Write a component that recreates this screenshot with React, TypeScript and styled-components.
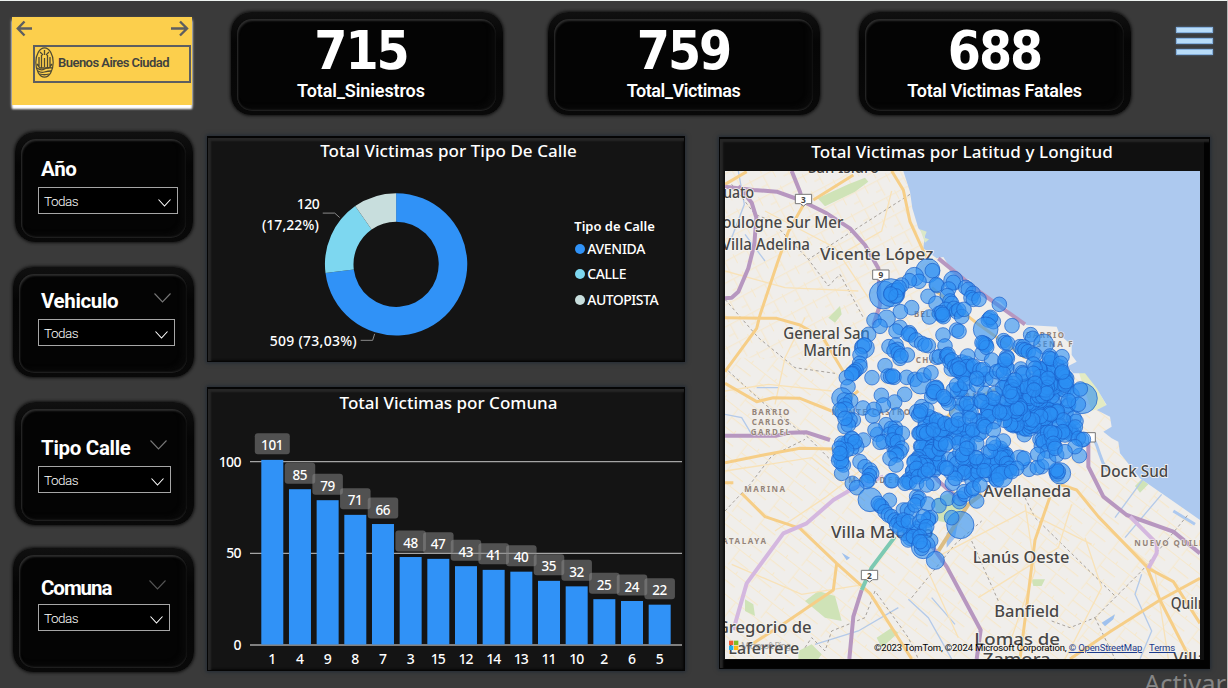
import React from "react";
import styled, { createGlobalStyle } from "styled-components";

const Global = createGlobalStyle`
  * { box-sizing: border-box; }
  body { margin: 0; background: #3a3a3a; overflow: hidden; }
`;

const din = `Roboto, "Liberation Sans", sans-serif`;
const segoe = `"Noto Sans", "Open Sans", sans-serif`;

const Page = styled.main`
  position: relative;
  width: 1228px;
  height: 688px;
  overflow: hidden;
  background: #3a3a3a;
  border-top: 1px solid #eef3f0;
  border-right: 1px solid #b9b9b9;
  color: #fff;
  font-family: ${din};
`;

const Header = styled.header`
  display: flex;
  align-items: flex-start;
  height: 129px;
  padding: 9px 13px 0 12px;
`;

const Logo = styled.div`
  width: 180px;
  height: 88px;
  margin-top: 7px;
  padding-top: 3px;
  background: #fccf4c;
  box-shadow: 0 4px 2px #fff, 0 2px 3px 0 #bdbdbd;
`;

const LogoArrows = styled.div`
  display: flex;
  justify-content: space-between;
  padding: 0 3px 0 4px;
  height: 25px;
`;

const LogoFrame = styled.div`
  display: flex;
  align-items: center;
  gap: 4px;
  width: 158px;
  height: 38px;
  margin-left: 21px;
  padding-bottom: 3px;
  border: 2px solid #5d5e60;
  color: #40423f;
  font-size: 13px;
  font-weight: 600;
  letter-spacing: -0.54px;
  white-space: nowrap;
`;

const Bevel = styled.section<{ $w: number; $h: number; $ml?: number; $mt?: number }>`
  flex: none;
  width: ${(p) => p.$w}px;
  height: ${(p) => p.$h}px;
  margin-left: ${(p) => p.$ml ?? 0}px;
  margin-top: ${(p) => p.$mt ?? 0}px;
  padding: 7px 7px 4px 6px;
  border-radius: 20px;
  background: linear-gradient(180deg, #101010, #050505 30%, #090909);
  box-shadow: 0 0 3px 1px #121212;
`;

const BevelFace = styled.div<{ $top: number }>`
  height: 100%;
  padding: ${(p) => p.$top}px 0 0 20px;
  border-radius: 15px;
  background: #040404;
  box-shadow: inset 1px 2px 2px #2c2c2c, inset 0 -1px 2px #262626, inset -5px -4px 4px #090909;
`;

const KpiFace = styled(BevelFace)<{ $shift: number }>`
  display: flex;
  flex-direction: column;
  align-items: center;
  padding-left: 0;
  padding-right: ${(p) => p.$shift}px;
`;

const KpiValue = styled.div`
  height: 56px;
  font: 700 53px/54px "DejaVu Sans Condensed", "DejaVu Sans", sans-serif;
  letter-spacing: -2px;
`;

const KpiLabel = styled.div<{ $ls: number }>`
  font-size: 18px;
  font-weight: 600;
  line-height: 22px;
  letter-spacing: ${(p) => p.$ls}px;
  white-space: nowrap;
`;

const Menu = styled.div`
  display: flex;
  flex-direction: column;
  gap: 5px;
  margin: 17px 0 0 45px;
`;

const MenuBar = styled.i`
  width: 37px;
  height: 6px;
  background: #b8dcf8;
  border: 1px solid #86b0dc;
  box-shadow: 0 0 2px #5e86b4;
`;

const Body = styled.div`
  display: flex;
  align-items: flex-start;
`;

const Sidebar = styled.aside`
  width: 207px;
  padding-left: 12px;
`;

const SlicerHead = styled.div<{ $w: number; $ls: number }>`
  display: flex;
  justify-content: space-between;
  width: ${(p) => p.$w}px;
  height: 24px;
  margin-left: 3px;
  font-size: 20.5px;
  font-weight: 700;
  line-height: 24px;
  letter-spacing: ${(p) => p.$ls}px;
`;

const Select = styled.div<{ $w: number; $mt: number }>`
  display: flex;
  align-items: center;
  justify-content: space-between;
  width: ${(p) => p.$w}px;
  height: 27px;
  margin-top: ${(p) => p.$mt}px;
  padding: 0 6px 0 5px;
  border: 1px solid #a6a6a6;
  background: #000;
  font-size: 13.5px;
  font-weight: 300;
  letter-spacing: -0.5px;
`;

const Panels = styled.div`
  display: flex;
  flex-direction: column;
  gap: 25px;
  padding-top: 6px;
`;

const Panel = styled.section<{ $w: number; $h: number }>`
  width: ${(p) => p.$w}px;
  height: ${(p) => p.$h}px;
  background: #141414;
  border: 1px solid #050505;
  border-top-width: 2px;
  box-shadow: 0 0 4px 1px #222b35, inset 3px 3px 2px #262626, inset -1px -1px 2px #080808;
`;

const PanelTitle = styled.h2<{ $ls: number; $shift?: number; $lh?: number }>`
  margin: 0;
  height: 28px;
  padding-left: ${(p) => p.$shift ?? 0}px;
  font: 500 17px/${(p) => p.$lh ?? 25}px ${segoe};
  letter-spacing: ${(p) => p.$ls}px;
  text-align: center;
  white-space: nowrap;
`;

const ChartRow = styled.div`
  display: flex;
`;

const Legend = styled.div`
  width: 110px;
  padding-top: 49px;
  font: 500 14px/22px ${segoe};
`;

const LegendTitle = styled.div`
  height: 21px;
  letter-spacing: 0;
  font-weight: 600;
  font-size: 13px;
`;

const LegendItem = styled.div<{ $c: string; $ls: number }>`
  display: flex;
  align-items: center;
  gap: 2px;
  height: 25.5px;
  letter-spacing: ${(p) => p.$ls}px;
  &::before {
    content: "";
    width: 10px;
    height: 10px;
    margin-left: 1px;
    border-radius: 50%;
    background: ${(p) => p.$c};
  }
`;

const MapPanel = styled(Panel)`
  margin: 7px 0 0 34px;
  padding-left: 5px;
  background: #101010;
  box-shadow: 0 0 4px 1px #222b35, inset 3px 3px 2px #262626, inset -5px -8px 0 #020202;
`;

const MapFrame = styled.div`
  position: relative;
  width: 475px;
  height: 488px;
  margin-top: 4px;
  overflow: hidden;
  svg { display: block; }
`;

const Credits = styled.div`
  position: absolute;
  right: 25px;
  bottom: 5px;
  color: #000;
  font: 400 9.5px/12px ${din};
  letter-spacing: -0.16px;
  white-space: nowrap;
  a { color: #1b3a8c; text-decoration: underline; margin-right: 5px; }
  a:last-child { margin-right: 0; }
`;

const Watermark = styled.div`
  position: absolute;
  left: 1144px;
  top: 666px;
  color: #858585;
  font: 400 25.5px/32px ${segoe};
  white-space: nowrap;
`;

const Chevron = ({ w, h, c }: { w: number; h: number; c: string }) => (
  <svg width={w} height={h + 1} viewBox={`0 0 ${w} ${h + 1}`} style={{ marginTop: 4 }}>
    <path d={`M.5 .5L${w / 2} ${h}L${w - 0.5} .5`} fill="none" stroke={c} strokeWidth="1.1" />
  </svg>
);

const kpis = [
  { value: 715, label: "Total_Siniestros", w: 272, ml: 39, ls: -0.1, shift: 11 },
  { value: 759, label: "Total_Victimas", w: 272, ml: 45, ls: -0.4, shift: 0 },
  { value: 688, label: "Total Victimas Fatales", w: 272, ml: 39, ls: -0.2, shift: 0 },
];

const slicers = [
  { name: "Año", w: 178, h: 110, ml: 3, mt: 2, top: 18, head: 133, box: 140, gap: 6, caret: "", ls: -0.3 },
  { name: "Vehiculo", w: 181, h: 110, ml: 1, mt: 25, top: 15, head: 130, box: 137, gap: 6, caret: "#777", ls: -0.35 },
  { name: "Tipo Calle", w: 179, h: 123, ml: 3, mt: 25, top: 27, head: 126, box: 133, gap: 6, caret: "#777", ls: -0.3 },
  { name: "Comuna", w: 181, h: 124, ml: 1, mt: 23, top: 21, head: 125, box: 132, gap: 4, caret: "#555", ls: -1.05 },
];

const BLUE = "#3092f7";
const CX = 396.5;
const CY = 264.3;

function slice(from: number, to: number) {
  const p = (r: number, f: number) => {
    const a = f * Math.PI * 2;
    return `${CX + r * Math.sin(a)} ${CY - r * Math.cos(a)}`;
  };
  const big = to - from > 0.5 ? 1 : 0;
  return `M${p(71.3, from)}A71.3 71.3 0 ${big} 1 ${p(71.3, to)}L${p(42.7, to)}A42.7 42.7 0 ${big} 0 ${p(42.7, from)}Z`;
}

const Donut = () => (
  <svg width="367" height="195" viewBox="208 166 367 195" fontFamily={segoe} fontSize="14" fontWeight="500" fill="#fff">
    <path d={slice(0, 0.7303)} fill={BLUE} />
    <path d={slice(0.7303, 0.9025)} fill="#7dd7f0" />
    <path d={slice(0.9025, 1)} fill="#c8dedd" />
    <path d="M323 213H335L340 217.5M361 340.500H373L375 334" fill="none" stroke="#8b8b8b" />
    <text x="297" y="208.500" textLength="23">120</text>
    <text x="262" y="229.500" textLength="57">(17,22%)</text>
    <text x="270" y="346.500" textLength="87">509 (73,03%)</text>
  </svg>
);

const bars: [number, number][] = [
  [1, 101], [4, 85], [9, 79], [8, 71], [7, 66], [3, 48], [15, 47], [12, 43],
  [14, 41], [13, 40], [11, 35], [10, 32], [2, 25], [6, 24], [5, 22],
];

const digits = (v: number) => String(v).length;

const BarChart = () => (
  <svg width="475" height="252" viewBox="208 417 475 252" fontFamily={segoe} fontSize="14" fontWeight="500" fill="#fff">
    {[0, 50, 100].map((v) => (
      <g key={v}>
        <path d={`M250 ${645 - v * 1.833}H682`} stroke="#a5a5a5" strokeWidth="1.3" />
        <text x="241.500" y={650 - v * 1.833} textAnchor="end" textLength={digits(v) * 7.6}>{v}</text>
      </g>
    ))}
    {bars.map(([c, v], i) => {
      const x = 261.3 + i * 27.67;
      const y = 645 - v * 1.833;
      return (
        <g key={c}>
          <rect x={x} y={y} width="22" height={v * 1.833 - 0.5} fill={BLUE} />
          <text x={x + 11} y="664" textAnchor="middle" textLength={digits(c) * 7.5}>{c}</text>
        </g>
      );
    })}
    {bars.map(([c, v], i) => {
      const x = 272.3 + i * 27.67;
      const y = 645 - v * 1.833 - 26.5;
      const w = digits(v) === 3 ? 35 : 30.5;
      return (
        <g key={c}>
          <rect x={x - w / 2} y={y} width={w} height="21" rx="3" fill="#8a8a8a" fillOpacity="0.52" />
          <text x={x} y={y + 17} textAnchor="middle" textLength={digits(v) * 7.5} fontSize="13.5">{v}</text>
        </g>
      );
    })}
  </svg>
);

/* Pins are x, y and an optional radius; the map is drawn at three units to the pixel. */
type Pin = number[];
const northPins: Pin[] = [
  [324,62,36],[337,62],[283,80,28],[297,94],[268,92],[245,105],[190,135,42],[213,128,42],[222,130,30],[232,120],[237,112],[228,138],[212,132],
  [351,107],[349,104],[400,92,29],[400,97],[386,117],[382,137],[437,112],[445,118],[459,130],[453,143],[460,148],[477,148],[324,139],[348,160],
  [390,153],[395,160],[377,178],[366,196],[358,190],[370,200],[402,175],[410,185],[416,180],[425,200],[328,201],[275,173],[241,185],[432,178],[364,188],[368,193],
  [538,163],[509,205],[505,210],[520,215],[512,202],[497,238,37],[576,227],[632,254],[638,265],[671,282,30],[200,206,26],[162,211],[180,229],[146,253],
  [240,232],[228,243],[268,248],[272,255],[265,252],[288,270],[305,280],[325,287],[315,285],[410,240],[417,244],[369,255],[375,288],
  [207,290],[228,285],[232,298],[222,302],[235,310],[240,325],[262,315],[243,318],[133,294,30],[128,290],[133,285],[120,315],[119,340],[120,350],[108,360],[102,365],[98,370],[79,383],[95,372],[156,383],[195,347],[84,410],[66,444,31],[73,450],[92,452],[75,465],
  [204,378],[212,380],[222,382],[218,378],[260,382],[285,388],[302,400,32],[312,375],[333,368],[184,436],[254,433],[224,456],[190,465],[129,474],[162,478],
  [347,415],[349,412],[340,430],[335,440],[345,420,28],[342,425],[350,322],[358,320],[380,316],[382,320],[384,313],[390,335],[395,330],[404,350],[415,345],[443,318],[440,350],[420,365],[425,370],[430,375],[410,360],[418,355],[460,348],[480,360],[490,358],
  [486,310],[490,280],[495,282],[498,285],[500,292],[486,278],[515,330],[517,385],[530,365],[540,362],[550,370],[560,320],[562,325],[555,330],[551,272],[555,278],[563,280],[600,290],[610,290],[607,298],[615,300],[625,305],[640,312],[645,315],[690,318],[695,327],[688,325],[726,320],[722,340],
  [607,368],[610,372],[640,342],[645,355],[660,380],[740,385],[730,375],[735,380],[725,370],[740,400],[735,405],[738,395],[727,366],[786,445,46],[781,417],[775,463],[745,452],
  [380,450],[385,460],[375,445],[400,420],[410,405],[435,400],[440,460],[470,405],[495,430],[525,430],[520,445],[305,470],[290,485],[320,478],[370,440],[470,385],[485,455],
  [580,400],[575,410],[580,420],[582,433],[576,440],[570,425],[585,390],[680,400],[682,412],[676,420],[684,385],[680,430],[640,370],[645,400],[642,420],
];
const southPins: Pin[] = [
  [75,20,30],[100,45],[90,45],[75,65],[85,60],[158,33],[230,30],[165,75],[208,88],[225,80],[247,85],[130,105],[97,102],[100,115],[85,110],[70,120],[75,125],[110,125],[95,130],[65,140],[65,150],[60,160],[65,175],[70,180],[65,205],[60,165,26],
  [60,15],[75,40],[65,115],[95,100],[105,110],[80,135],[58,130],[60,145],
  [120,170],[135,185],[150,195],[155,205],[148,212],[145,225],[140,230],[97,235],[110,248],[190,110],[180,112],[218,105],[232,110],[245,130],[240,140],[225,145],[230,150],[210,160],[228,180],[213,227],[217,227],[262,230],[265,225],[268,232],[255,235],
  [150,284,36],[208,286],[180,302],[185,305],[175,295],[195,320],[205,330],[215,335],[225,345],[235,350],[245,355],[250,360],[258,355],[250,315],[262,315],[275,320],[290,275],[297,280],[292,290],[285,300],[323,297],[326,340],[332,338],[325,345],
  [298,365],[295,370],[290,380],[275,395],[270,400],[255,385],[265,405],[280,395],[230,360],[240,370],[250,345],[265,350],[300,350],[310,335],[315,375],[320,365],[300,395],[332,407],[310,425,36],[305,430],[310,420],[300,410],[346,466,27],[421,360,41],[395,338],[357,302],[383,280],[418,290],[420,280],[435,268],[432,260],[455,255],[470,288],[460,250],
  [397,235],[405,220],[340,235],[375,188],[380,190],[720,205,32],[708,200],[712,207],[715,200],[710,195],[778,152],[785,105],[775,100],[790,103],[765,125],[665,185],[627,193],[599,165,30],[612,160],[653,148],[652,188],[680,165,28],[705,125],[710,150],[700,115],[705,130],[735,140],
  [282,172],[290,190],[300,25],[296,30],[302,18],[300,85],[310,80],[320,85],[358,50],[350,45],[340,75],[375,55],[395,60],[415,45],[450,40],[458,75],[490,60],[495,65],[520,75],[550,108],[520,115],[470,115],[468,158],[440,130],
  [560,175],[570,190],[550,200],[590,190],[480,240],[530,225],[545,215,32],[575,200],[295,215],[315,205],[325,195],[290,235],[320,240],
];

/* Dense districts: centre, half axes and number of pins. */
const districts = [
  [665,455,95,75,80],[680,520,100,50,60],[610,470,60,70,40],[680,390,55,60,24],[550,490,55,55,24],[470,500,80,55,24],
  [330,540,45,40,20],[325,620,40,50,26],[400,570,60,60,26],[435,650,50,45,22],[530,640,45,50,32],[300,660,35,40,12],[545,380,70,45,12],[430,390,50,60,12],[210,560,40,40,8],[690,580,45,40,10],
];

function districtPins(): Pin[] {
  let seed = 20231;
  const rnd = () => (seed = (seed * 16807) % 2147483647) / 2147483647;
  return districts.flatMap(([x, y, a, b, n]) =>
    Array.from({ length: n }, () => {
      const t = rnd() * Math.PI * 2;
      const r = Math.sqrt(rnd());
      return [Math.round(x + a * r * Math.cos(t)), Math.round(y + b * r * Math.sin(t))];
    }).filter(([px, py]) => Math.hypot((px - 605) / 50, (py - 588) / 30) > 1)
  );
}

const Pins = ({ list }: { list: Pin[] }) => (
  <>{list.map(([x, y, r = 22], i) => <circle key={i} cx={x} cy={y} r={r} />)}</>
);

const towns: [string, number, number, number][] = [
  ["San Isidro", 250, 7, 212], ["uato", -5, 82, 92], ["oulogne Sur Mer", -8, 170, 363], ["Villa Adelina", -10, 237, 265],
  ["Vicente López", 285, 266, 340], ["General San", 175, 503, 260], ["Martín", 235, 554, 143], ["Villa Madero", 318, 1102, 307],
  ["Gregorio de", -25, 1385, 285], ["Laferrere", 10, 1449, 213], ["Dock Sud", 1125, 917, 205], ["Avellaneda", 775, 979, 263],
  ["Lanús Oeste", 743, 1175, 290], ["Banfield", 808, 1339, 195], ["Quilmes", 1337, 1314, 165], ["Lomas de", 748, 1422, 257],
  ["Zamora", 773, 1482, 204], ["Villa", 1345, 1479, 100],
];

const quarters: [string, number, number, number][] = [
  ["BARRIO", 80, 733, 113], ["CARLOS", 80, 762, 113], ["GARDEL", 77, 791, 118], ["MARINA", 58, 963, 122], ["ATALAYA", -8, 1118, 131],
  ["MONTE CASTRO", 320, 733, 235], ["NUEVO QUILMES", 1228, 1125, 252], ["BARRIO", 903, 500, 114], ["SENA F", 935, 529, 108],
  ["BELGRANO", 567, 437, 150], ["CHACARITA", 572, 577, 173], ["ALMAGRO", 720, 684, 150], ["MATADEROS", 370, 937, 200],
];

const shields: [string, number, number][] = [["3", 211, 70], ["9", 443, 297], ["2", 409, 1198], ["", 1062, 785]];

const CityMap = () => (
  <svg width="475" height="488" viewBox="0 0 1425 1464" fontFamily={segoe}>
    <defs>
      <pattern id="streetsA" width="74" height="58" patternUnits="userSpaceOnUse" patternTransform="rotate(-28)">
        <path d="M0 8H74M20 8V58M0 38H20M52 0V30" fill="none" stroke="#f6e8cc" strokeWidth="3" />
      </pattern>
      <pattern id="streetsB" width="88" height="66" patternUnits="userSpaceOnUse" patternTransform="rotate(38)">
        <path d="M0 10H88M30 10V66M30 42H88M66 0V10" fill="none" stroke="#f6e8cc" strokeWidth="3" />
      </pattern>
    </defs>
    <rect width="1425" height="1464" fill="#f0eeeb" />
    <path d="M0 0H640V560H0Z" fill="url(#streetsA)" />
    <path d="M0 560H700V1464H0ZM700 600H1425V1464H700Z" fill="url(#streetsB)" />
    <g fill="#cfe3b7">
      <path d="M278 82L370 40 420 20 430 32 390 62 300 106ZM310 440L345 405 350 430 330 455ZM240 1290L280 1260 330 1275 350 1350 300 1340ZM60 1285L85 1300 90 1335 60 1320ZM455 1400L500 1370 520 1385 470 1430ZM1230 945L1250 925 1270 940 1245 965ZM920 1225H960L950 1245H925ZM625 985L690 960 730 1010 690 1060 640 1050ZM220 1440L260 1420 290 1450 280 1464H220ZM870 640L920 620 910 670Z" />
      <path d="M1060 600H1085L1115 650 1145 705 1100 720Z" fill="#e3ebc3" />
    </g>
    <path d="M535 0L555 62 562 112 580 172 600 192 595 232 635 262 655 258 672 285 675 307 735 327 765 372 825 392 865 432 905 462 995 467 1005 492 1040 522 1040 552 1055 572 1025 587 1045 607 1080 607 1115 652 1145 702 1115 717 1155 737 1160 767 1135 782 1160 802 1180 812 1185 847 1245 922 1325 977 1425 1047V0Z" fill="#adc9ef" />
    <path d="M585 175L605 182 598 200 612 205 600 215Z" fill="#dbe8c8" />
    <g fill="none" stroke="#adc9ef" strokeWidth="9">
      <path d="M1105 800C1130 850 1120 860 1148 900M1345 1020L1410 1060" />
    </g>
    <path d="M1130 1355L1170 1330 1165 1345 1140 1366ZM350 1145L375 1160 365 1168ZM665 1085L700 1050 690 1100 665 1130Z" fill="#9fc1ee" />
    <g fill="none" stroke="#b4cae9" strokeWidth="4">
      <path d="M40 0L58 100 20 200M60 190L120 270M270 1420L400 1380 520 1310M550 1285L610 1340 680 1464M620 1280L690 1360M1265 910L1170 1040M1310 970L1200 1100M1250 1210L1230 1270 1280 1380 1245 1464M0 730L50 740 80 790M95 650H160" />
    </g>
    <g fill="none" stroke="#99928a" strokeWidth="2.5" strokeDasharray="9 8">
      <path d="M20 40L90 130 140 150 250 265 310 345 345 310 415 440M555 70L250 265M0 385L100 500 210 590 330 607M10 600L120 700 250 800 330 880M0 1020L75 940 140 855 240 805M240 1430L260 1400 300 1440 320 1380 420 1340 450 1260 550 1400 580 1464M740 1110L820 1290M900 980L930 1040 1170 1275M980 1350L1035 1370 1110 1340 1250 1200 1390 1030M1110 1340L1170 1464M560 1280L690 1120 770 1050" />
    </g>
    <g fill="none" stroke="#f8e2b8" strokeWidth="4">
      <path d="M500 60L470 180 330 260M120 120L330 230 430 380M0 300L180 350 400 360M240 440L180 560 150 700M0 660L130 640 320 660M0 900L260 860 420 990M150 1080L300 980 470 850M20 1180L230 1270 420 1240M650 1150L900 1020 1100 1120M760 1280L1000 1130 1040 1000M860 1400L930 1200 900 1000M1020 1464L1130 1250 1080 1100M1330 1464L1290 1200 1140 1060M600 1180L700 1400" />
    </g>
    <g fill="none" stroke="#f6ce87" strokeWidth="9" strokeLinejoin="round">
      <path d="M500 0L535 57 555 152 605 262M0 40L65 2M265 87L385 12M235 102L190 182 155 282 105 432 95 472 0 602M0 440L155 442 225 462 295 502 355 602M0 637L95 692 145 680 225 682 320 720 400 660M0 875L115 852 225 832 335 834M50 967L120 1037 225 1072 335 1177 435 1267 560 1464M335 1177L325 1257 185 1352 85 1417M0 935H25M975 977L930 1107 905 1307 885 1464M995 937L1055 957 1120 1037 1265 1187 1305 1287 1395 1464M1270 1192L1345 1232 1425 1357M1425 1222L1305 1287 1155 1382 1035 1464M560 860L700 700 850 640M620 350L760 460 900 560" />
      <path d="M640 1140L730 1000 770 970" stroke="#dcbd83" strokeWidth="12" />
    </g>
    <g fill="none" stroke="#b797c0" strokeWidth="12" strokeLinejoin="round">
      <path d="M200 0L225 62 235 102M0 47L85 57 155 62 225 87 305 127 375 172 420 222 460 292 465 402 445 462M0 382L20 380 40 362 70 292 88 220 94 140 80 95 40 45M0 794H155L195 785 245 784 315 807M373 1464L385 1337 410 1257M615 1117L665 1187 767 1377 755 1464M1090 787V887L1135 977 1205 1032 1345 1082 1425 1147M640 262L760 360 900 460M580 860L640 930 720 1000" />
      <path d="M410 1257L440 1190 510 1097" stroke="#7cc9b2" />
      <path d="M25 1377L65 1237 175 1087 245 1057 325 987 385 952 475 917M1215 1037L1295 1117V1147L1270 1192" stroke="#d4b7df" />
    </g>
    <g fill="#93847a" fontSize="24" fontWeight="700" stroke="#f4f1ec" strokeWidth="3" paintOrder="stroke">
      {quarters.map(([t, x, y, w]) => <text key={t + y} x={x} y={y} textLength={w}>{t}</text>)}
    </g>
    <g fill="#484746" fontSize="50" fontWeight="500" stroke="#f7f5f1" strokeWidth="5" paintOrder="stroke">
      {towns.map(([t, x, y, w]) => <text key={t + y} x={x} y={y} textLength={w} lengthAdjust="spacingAndGlyphs">{t}</text>)}
    </g>
    {shields.map(([t, x, y]) => (
      <g key={t + x}>
        <path d={`M${x} ${y}H${x + 49}V${y + 28}H${x + 34}L${x + 24.5} ${y + 35}L${x + 15} ${y + 28}H${x}Z`} fill="#fff" stroke="#777" strokeWidth="3" />
        <text x={x + 24.5} y={y + 25} textAnchor="middle" fontSize="25" fontWeight="700" fill="#444">{t}</text>
      </g>
    ))}
    <g transform="translate(285 237)" fill="#2c90f4" fillOpacity="0.6" stroke="#1c5fc9" strokeOpacity="0.8" strokeWidth="2.6">
      <Pins list={districtPins()} />
      <Pins list={northPins} />
      <g transform="translate(0 465)"><Pins list={southPins} /></g>
    </g>
    <g transform="translate(12 1409)">
      <path d="M0 0H13V13H0Z" fill="#f25b30" /><path d="M15 0H28V13H15Z" fill="#83bd25" />
      <path d="M0 15H13V28H0Z" fill="#20aeea" /><path d="M15 15H28V28H15Z" fill="#fbbb16" />
      <text x="36" y="24" fontSize="27" fill="#777" fillOpacity="0.65" textLength="150">Microsoft Bing</text>
    </g>
  </svg>
);

export default function App() {
  return (
    <Page>
      <Global />
      <Header>
        <Logo>
          <LogoArrows>
            <svg width="17" height="17" viewBox="0 0 17 17" fill="none" stroke="#5d5e60" strokeWidth="2.4">
              <path d="M16 8.500H2M8.500 1.500L1.800 8.500L8.500 15.500" />
            </svg>
            <svg width="18" height="17" viewBox="0 0 18 17" fill="none" stroke="#5d5e60" strokeWidth="2.4">
              <path d="M0 8.500H15.500M9 1.500L16 8.500L9 15.500" />
            </svg>
          </LogoArrows>
          <LogoFrame>
            <svg width="19" height="31" viewBox="0 0 19 31" fill="none" stroke="#4f4a32">
              <ellipse cx="9.500" cy="15.500" rx="8.700" ry="14.700" strokeWidth="1.2" />
              <path d="M5 5L8 8M14 5L11 8M9.500 3V8M4 20V10M6.500 21V8M9.500 20V11M12.500 21V8M15 20V10M2 17L5 21H14L17 17" strokeWidth="1.3" />
              <path d="M2 21Q6 24 9.500 22T17 21M3 24Q6 26 9.500 25T16 24M5 27Q9 28.500 14 27" strokeWidth="1.3" />
            </svg>
            Buenos Aires Ciudad
          </LogoFrame>
        </Logo>
        {kpis.map((k) => (
          <Bevel key={k.label} $w={k.w} $h={103} $ml={k.ml} $mt={2}>
            <KpiFace $top={5} $shift={k.shift}>
              <KpiValue>{k.value}</KpiValue>
              <KpiLabel $ls={k.ls}>{k.label}</KpiLabel>
            </KpiFace>
          </Bevel>
        ))}
        <Menu><MenuBar /><MenuBar /><MenuBar /></Menu>
      </Header>
      <Body>
        <Sidebar>
          {slicers.map((s) => (
            <Bevel key={s.name} $w={s.w} $h={s.h} $ml={s.ml} $mt={s.mt}>
              <BevelFace $top={s.top} style={{ paddingLeft: 20 - s.ml }}>
                <SlicerHead $w={s.head} $ls={s.ls}>
                  {s.name}
                  {s.caret && <Chevron w={17} h={9} c={s.caret} />}
                </SlicerHead>
                <Select $w={s.box} $mt={s.gap}>
                  Todas
                  <Chevron w={13} h={7} c="#fff" />
                </Select>
              </BevelFace>
            </Bevel>
          ))}
        </Sidebar>
        <Panels>
          <Panel $w={478} $h={226}>
            <PanelTitle $ls={0.05} $shift={5}>Total Victimas por Tipo De Calle</PanelTitle>
            <ChartRow>
              <Donut />
              <Legend>
                <LegendTitle>Tipo de Calle</LegendTitle>
                <LegendItem $c={BLUE} $ls={-0.3}>AVENIDA</LegendItem>
                <LegendItem $c="#7dd7f0" $ls={-0.4}>CALLE</LegendItem>
                <LegendItem $c="#c8dedd" $ls={-0.5}>AUTOPISTA</LegendItem>
              </Legend>
            </ChartRow>
          </Panel>
          <Panel $w={478} $h={284}>
            <PanelTitle $ls={0} $shift={5} $lh={27}>Total Victimas por Comuna</PanelTitle>
            <BarChart />
          </Panel>
        </Panels>
        <MapPanel $w={491} $h={532}>
          <PanelTitle $ls={0.1} style={{ paddingRight: 10 }}>Total Victimas por Latitud y Longitud</PanelTitle>
          <MapFrame>
            <CityMap />
            <Credits>
              ©2023 TomTom, ©2024 Microsoft Corporation, <a>© OpenStreetMap</a> <a>Terms</a>
            </Credits>
          </MapFrame>
        </MapPanel>
      </Body>
      <Watermark>Activar</Watermark>
    </Page>
  );
}
